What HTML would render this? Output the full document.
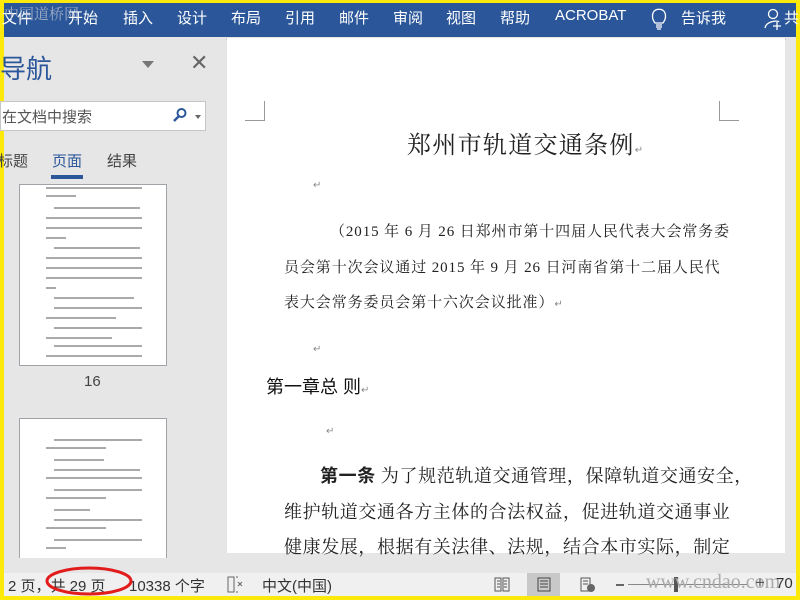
<!DOCTYPE html>
<html><head><meta charset="utf-8"><style>
*{margin:0;padding:0;box-sizing:border-box}
body{width:800px;height:600px;overflow:hidden;background:#fdea0a;position:relative;font-family:"Liberation Sans","Noto Sans CJK SC",sans-serif}
.a{position:absolute;white-space:nowrap}
.rib{left:4px;top:3px;width:792px;height:34px;background:#2b579a;color:#fff;font-size:15px}
.rib span{position:absolute;top:4px}
.nav{left:4px;top:37px;width:221px;height:536px;background:#e6e6e6}
.doc{left:225px;top:37px;width:571px;height:536px;background:#e6e6e6}
.page{left:227px;top:38px;width:558px;height:515px;background:#fff}
.status{left:4px;top:573px;width:792px;height:23px;background:#f0f0f0;font-size:15px;color:#333}
.serif{font-family:"Liberation Serif","Noto Serif CJK SC",serif;color:#222}
.th{background:#fff;border:1px solid #a0a4a8}
.ln{position:absolute;height:2px;background:#aaa;left:40px}
</style></head><body>
<div class="a rib">
<span style="left:-2px;color:#fff">文件</span>
<span style="left:0px;top:0px;color:#b8c0d0;font-family:'Noto Serif CJK SC',serif;font-size:15px;opacity:.8">中国道桥网</span>
<span style="left:64px">开始</span><span style="left:119px">插入</span><span style="left:173px">设计</span><span style="left:227px">布局</span><span style="left:281px">引用</span><span style="left:335px">邮件</span><span style="left:389px">审阅</span><span style="left:442px">视图</span><span style="left:496px">帮助</span><span style="left:551px">ACROBAT</span>
<svg style="position:absolute;left:647px;top:4px" width="16" height="24" viewBox="0 0 16 24"><path d="M4 16 C1 12 1 9 2 6 C4 1 12 1 14 6 C15 9 15 12 12 16 Z M5 18 H11 M5 20 H11 M6 22 H10" fill="none" stroke="#fff" stroke-width="1.3"/></svg>
<span style="left:677px">告诉我</span>
<svg style="position:absolute;left:760px;top:5px" width="20" height="22" viewBox="0 0 20 22"><circle cx="9" cy="6" r="4.5" fill="none" stroke="#fff" stroke-width="1.3"/><path d="M1 20 C2 13 14 12 15 14 M13 14 V22 M9 18 H17" fill="none" stroke="#fff" stroke-width="1.3"/></svg>
<span style="left:780px">共</span>
</div>
<div class="a nav">
<div class="a" style="left:-4px;top:12px;font-size:26px;color:#2b579a">导航</div>
<div class="a" style="left:138px;top:24px;width:0;height:0;border-left:6px solid transparent;border-right:6px solid transparent;border-top:7px solid #777"></div>
<div class="a" style="left:186px;top:13px;font-size:22px;color:#666">✕</div>
<div class="a" style="left:-4px;top:64px;width:206px;height:30px;background:#fff;border:1px solid #c6c6c6"></div>
<div class="a" style="left:-2px;top:69px;font-size:15px;color:#555">在文档中搜索</div>
<svg class="a" style="left:168px;top:70px" width="16" height="16" viewBox="0 0 16 16"><circle cx="9.5" cy="6" r="4" fill="none" stroke="#2b579a" stroke-width="2"/><path d="M7 9 L2 14" stroke="#2b579a" stroke-width="2.4"/></svg>
<div class="a" style="left:191px;top:78px;border-left:3px solid transparent;border-right:3px solid transparent;border-top:4px solid #666"></div>
<div class="a" style="left:-6px;top:113px;font-size:15px;color:#444">标题</div>
<div class="a" style="left:48px;top:113px;font-size:15px;color:#2b579a">页面</div>
<div class="a" style="left:103px;top:113px;font-size:15px;color:#444">结果</div>
<div class="a" style="left:47px;top:138px;width:32px;height:4px;background:#2b579a"></div>
<div class="a th" style="left:15px;top:147px;width:148px;height:182px">
<div class="ln" style="top:2px;width:96px;left:26px"></div><div class="ln" style="top:10px;width:30px;left:26px"></div>
<div class="ln" style="top:22px;width:86px;left:34px"></div><div class="ln" style="top:32px;width:96px;left:26px"></div><div class="ln" style="top:42px;width:96px;left:26px"></div><div class="ln" style="top:52px;width:20px;left:26px"></div>
<div class="ln" style="top:62px;width:86px;left:34px"></div><div class="ln" style="top:72px;width:96px;left:26px"></div><div class="ln" style="top:82px;width:96px;left:26px"></div><div class="ln" style="top:92px;width:96px;left:26px"></div><div class="ln" style="top:102px;width:10px;left:26px"></div>
<div class="ln" style="top:112px;width:80px;left:34px"></div><div class="ln" style="top:122px;width:88px;left:34px"></div><div class="ln" style="top:132px;width:70px;left:26px"></div>
<div class="ln" style="top:142px;width:88px;left:34px"></div><div class="ln" style="top:152px;width:66px;left:26px"></div>
<div class="ln" style="top:160px;width:88px;left:34px"></div><div class="ln" style="top:170px;width:96px;left:26px"></div>
</div>
<div class="a" style="left:80px;top:336px;font-size:15px;color:#444">16</div>
<div class="a th" style="left:15px;top:381px;width:148px;height:140px;border-bottom:none">
<div class="ln" style="top:20px;width:88px;left:34px"></div><div class="ln" style="top:28px;width:60px;left:26px"></div>
<div class="ln" style="top:40px;width:50px;left:34px"></div><div class="ln" style="top:50px;width:86px;left:34px"></div><div class="ln" style="top:58px;width:96px;left:26px"></div>
<div class="ln" style="top:70px;width:88px;left:34px"></div><div class="ln" style="top:78px;width:60px;left:26px"></div>
<div class="ln" style="top:90px;width:36px;left:34px"></div><div class="ln" style="top:100px;width:88px;left:34px"></div><div class="ln" style="top:108px;width:60px;left:26px"></div>
<div class="ln" style="top:120px;width:88px;left:34px"></div><div class="ln" style="top:128px;width:20px;left:26px"></div>
</div>
</div>
<div class="a doc"></div>
<div class="a" style="left:226px;top:38px;width:560px;height:2px;background:#ccc"></div>
<div class="a page">
<div class="a" style="left:18px;top:63px;width:20px;height:20px;border-right:1px solid #999;border-bottom:1px solid #999"></div>
<div class="a" style="left:492px;top:63px;width:20px;height:20px;border-left:1px solid #999;border-bottom:1px solid #999"></div>
<div class="a serif" style="left:180px;top:87px;font-size:24px;letter-spacing:1.3px">郑州市轨道交通条例<span style="font-size:10px;color:#888">↵</span></div>
<div class="a" style="left:86px;top:142px;font-size:10px;color:#888">↵</div>
<div class="a serif" style="left:103px;top:182px;font-size:15px;letter-spacing:0.9px">（2015 年 6 月 26 日郑州市第十四届人民代表大会常务委</div>
<div class="a serif" style="left:57px;top:218px;font-size:15px;letter-spacing:0.9px">员会第十次会议通过 2015 年 9 月 26 日河南省第十二届人民代</div>
<div class="a serif" style="left:57px;top:253px;font-size:15px;letter-spacing:0.9px">表大会常务委员会第十六次会议批准）<span style="font-size:10px;color:#888">↵</span></div>
<div class="a" style="left:86px;top:306px;font-size:10px;color:#888">↵</div>
<div class="a" style="left:39px;top:335px;font-size:18px;color:#111">第一章总 则<span style="font-size:10px;color:#888">↵</span></div>
<div class="a" style="left:99px;top:388px;font-size:10px;color:#888">↵</div>
<div class="a serif" style="left:57px;top:424px;font-size:18px;letter-spacing:0.6px"><span style="margin-left:36px;font-family:'Liberation Sans','Noto Sans CJK SC',sans-serif;font-weight:bold">第一条</span> 为了规范轨道交通管理，保障轨道交通安全，</div>
<div class="a serif" style="left:57px;top:460px;font-size:18px;letter-spacing:0.6px">维护轨道交通各方主体的合法权益，促进轨道交通事业</div>
<div class="a serif" style="left:57px;top:495px;font-size:18px;letter-spacing:0.6px">健康发展，根据有关法律、法规，结合本市实际，制定</div>
</div>
<div class="a" style="left:786px;top:40px;width:10px;height:533px;background:#e6e6e6"></div>
<div class="a status">
<span class="a" style="left:4px;top:2px">2 页，共 29 页</span>
<span class="a" style="left:125px;top:2px">10338 个字</span>
<svg class="a" style="left:222px;top:3px" width="18" height="17" viewBox="0 0 18 17"><path d="M2 1 H8 V16 H2 Z M10 1 H12 M10 16 H12" fill="none" stroke="#666"/><path d="M12 6 L16 10 M16 6 L12 10" stroke="#666"/></svg>
<span class="a" style="left:258px;top:2px">中文(中国)</span>
<svg class="a" style="left:490px;top:4px" width="16" height="15" viewBox="0 0 16 15"><path d="M1 1 H7 V14 H1 Z M9 1 H15 V14 H9 Z M3 4H6M3 7H6M3 10H6M10 4H13M10 7H13M10 10H13" fill="none" stroke="#555"/></svg>
<div class="a" style="left:523px;top:0;width:33px;height:23px;background:#c8c8c8"></div>
<svg class="a" style="left:533px;top:4px" width="14" height="15" viewBox="0 0 14 15"><path d="M1 1H13V14H1Z M3 4H11M3 7H11M3 10H11" fill="none" stroke="#444"/></svg>
<svg class="a" style="left:576px;top:4px" width="16" height="16" viewBox="0 0 16 16"><path d="M1 1H10V14H1Z M3 4H8M3 7H8" fill="none" stroke="#555"/><circle cx="11" cy="11" r="4" fill="#666"/></svg>
<div class="a" style="left:612px;top:11px;width:8px;height:2px;background:#666"></div>
<div class="a" style="left:624px;top:11px;width:120px;height:1px;background:#888"></div>
<div class="a" style="left:670px;top:4px;width:4px;height:15px;background:#555"></div>
<span class="a" style="left:642px;top:-2px;font-family:'Liberation Serif',serif;font-size:20px;color:#aaa">www.cndao.com</span>
<span class="a" style="left:751px;top:0px;font-size:17px;color:#555">+</span>
<span class="a" style="left:772px;top:2px">70</span>
<svg class="a" style="left:40px;top:-8px" width="90" height="32" viewBox="0 0 90 32"><ellipse cx="45" cy="16" rx="42" ry="13" fill="none" stroke="#e21c1c" stroke-width="3"/></svg>
</div>
</body></html>
